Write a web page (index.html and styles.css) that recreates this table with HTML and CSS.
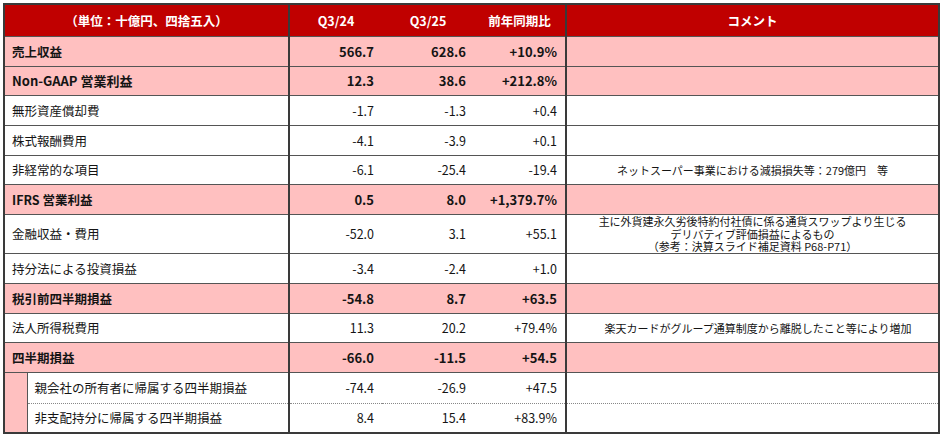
FILE: index.html
```html
<!DOCTYPE html>
<html lang="ja">
<head>
<meta charset="utf-8">
<title>連結損益</title>
<link rel="stylesheet" href="styles.css">
</head>
<body>
<table class="pl">
  <colgroup>
    <col class="c-indent"><col class="c-label"><col class="c-num"><col class="c-num2"><col class="c-num2"><col class="c-comment">
  </colgroup>
  <thead>
    <tr class="head">
      <th colspan="2" class="lbl-h">（単位：十億円、四捨五入）</th>
      <th>Q3/24</th>
      <th>Q3/25</th>
      <th class="last">前年同期比</th>
      <th>コメント</th>
    </tr>
  </thead>
  <tbody>
    <tr class="hl"><td colspan="2" class="lbl">売上収益</td><td>566.7</td><td>628.6</td><td class="last">+10.9%</td><td class="cm"></td></tr>
    <tr class="hl r29"><td colspan="2" class="lbl big">Non-GAAP 営業利益</td><td>12.3</td><td>38.6</td><td class="last">+212.8%</td><td class="cm"></td></tr>
    <tr><td colspan="2" class="lbl">無形資産償却費</td><td>-1.7</td><td>-1.3</td><td class="last">+0.4</td><td class="cm"></td></tr>
    <tr><td colspan="2" class="lbl">株式報酬費用</td><td>-4.1</td><td>-3.9</td><td class="last">+0.1</td><td class="cm"></td></tr>
    <tr class="r29"><td colspan="2" class="lbl">非経常的な項目</td><td>-6.1</td><td>-25.4</td><td class="last">-19.4</td><td class="cm">ネットスーパー事業における減損損失等：279億円　等</td></tr>
    <tr class="hl"><td colspan="2" class="lbl">IFRS 営業利益</td><td>0.5</td><td>8.0</td><td class="last">+1,379.7%</td><td class="cm"></td></tr>
    <tr class="r39"><td colspan="2" class="lbl">金融収益・費用</td><td>-52.0</td><td>3.1</td><td class="last">+55.1</td><td class="cm top"><div class="ln">主に外貨建永久劣後特約付社債に係る通貨スワップより生じる</div><div class="ln">デリバティブ評価損益によるもの</div><div class="ln">（参考：決算スライド補足資料 P68-P71）</div></td></tr>
    <tr><td colspan="2" class="lbl">持分法による投資損益</td><td>-3.4</td><td>-2.4</td><td class="last">+1.0</td><td class="cm"></td></tr>
    <tr class="hl"><td colspan="2" class="lbl">税引前四半期損益</td><td>-54.8</td><td>8.7</td><td class="last">+63.5</td><td class="cm"></td></tr>
    <tr class="r29"><td colspan="2" class="lbl">法人所得税費用</td><td>11.3</td><td>20.2</td><td class="last">+79.4%</td><td class="cm">　楽天カードがグループ通算制度から離脱したこと等により増加</td></tr>
    <tr class="hl"><td colspan="2" class="lbl">四半期損益</td><td>-66.0</td><td>-11.5</td><td class="last">+54.5</td><td class="cm"></td></tr>
    <tr class="r31 sub1"><td rowspan="2" class="indent"></td><td class="lbl">親会社の所有者に帰属する四半期損益</td><td>-74.4</td><td>-26.9</td><td class="last">+47.5</td><td class="cm"></td></tr>
    <tr class="r29 sub2"><td class="lbl">非支配持分に帰属する四半期損益</td><td>8.4</td><td>15.4</td><td class="last">+83.9%</td><td class="cm"></td></tr>
  </tbody>
</table>
</body>
</html>
```

FILE: styles.css
```css
html, body {
  margin: 0;
  padding: 0;
  background: #ffffff;
}
body {
  padding: 3px 0 0 3px;
  font-family: "Noto Sans CJK JP", "Noto Sans", sans-serif;
  color: #141414;
}
.pl {
  border-collapse: collapse;
  table-layout: fixed;
  width: 935px;
  font-size: 12.5px;
}
.c-indent { width: 23px; }
.c-label { width: 262px; }
.c-num { width: 93px; }
.c-num2 { width: 92px; }
.c-comment { width: 373px; }

.pl th, .pl td {
  padding: 0 8px 0 8px;
  border-top: 1px solid #555;
  border-bottom: 1px solid #555;
  white-space: nowrap;
  overflow: visible;
  line-height: 16px;
}
.pl tr { height: 30px; }
.pl tr.r31 { height: 31px; }
.pl tr.r29 { height: 29px; }
.pl tr.r39 { height: 39px; }

.head th {
  height: 31px;
  background: #c00000;
  color: #ffffff;
  font-weight: bold;
  font-size: 12.5px;
  text-align: center;
  border-top: 2px solid #3a3a3a;
  border-bottom: none;
}
.pl th:first-child, .pl td:first-child { border-left: 2px solid #3a3a3a; }
.pl th:last-child, .pl td:last-child { border-right: 2px solid #3a3a3a; }

.lbl-h, .pl td.lbl { border-right: 2px solid #3a3a3a; }
.pl th.last, .pl td.last { border-right: 2px solid #3a3a3a; }

.pl td {
  text-align: right;
  vertical-align: middle;
}
.pl td.lbl {
  text-align: left;
  padding-left: 7px;
}
.pl td.cm {
  text-align: center;
  font-size: 11px;
  line-height: 14px;
  padding: 0 4px;
}
.pl td.cm.top { vertical-align: top; padding-top: 0; }
.ln {
  height: 12.6px;
  line-height: 12.6px;
}

.hl td {
  background: #ffc0c0;
  font-weight: bold;
  font-size: 13px;
}
.hl td.lbl { font-size: 12.5px; }
.hl td.lbl.big { font-size: 13px; }

.pl td.indent {
  background: #ffc0c0;
  border-top: none;
  padding: 0;
  border-bottom: 2px solid #3a3a3a;
}
.sub1 td.lbl, .sub2 td.lbl { border-left: 1px solid #555; padding-left: 7px; }
.sub1 td { border-bottom: 1px dotted #888; }
.sub2 td { border-top: 1px dotted #888; border-bottom: 2px solid #3a3a3a; }
```
